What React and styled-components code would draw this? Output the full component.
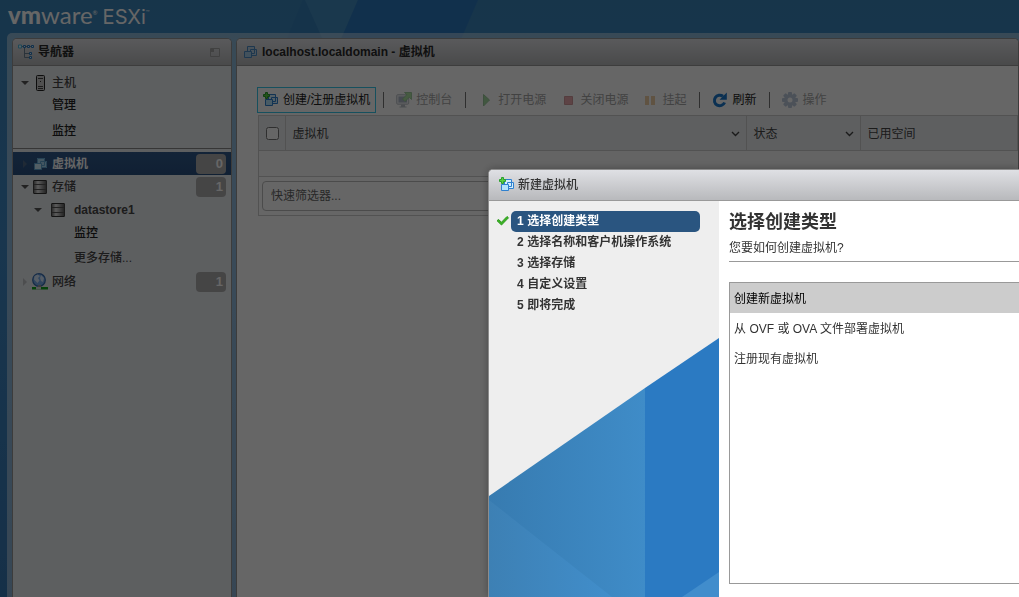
import React from 'react';
import styled, { createGlobalStyle, css } from 'styled-components';

const sans = '"Liberation Sans", "Noto Sans CJK SC", sans-serif';

const GlobalStyle = createGlobalStyle`
  *, *::before, *::after { box-sizing: border-box; }
  html, body, #root { height: 100%; }
  body { margin: 0; overflow: hidden; font: 12px/20px ${sans}; color: #333; }
  button, input { font: inherit; color: inherit; }
  a { color: inherit; text-decoration: none; }
  svg { display: block; flex: none; }
`;

const Page = styled.div`
  position: relative;
  isolation: isolate;
  display: flex;
  flex-direction: column;
  height: 100%;
  padding-left: 7px;
  background: linear-gradient(#3a84ba, #3f88c4 40%, #3678b4);
`;

const HeaderArt = styled.svg`
  position: absolute;
  z-index: -1;
  top: 0;
  left: 0;
`;

const TopBar = styled.header`
  display: flex;
  align-items: baseline;
  height: 33px;
  padding-left: 1px;
  color: #fff;
  font-family: Lato, sans-serif;
  white-space: nowrap;
  sup { font-size: 6px; line-height: 6px; vertical-align: 9px; }
`;

const Brand = styled.span`
  font-size: 24px;
  line-height: 30px;
  b { font-weight: 900; }
`;

const Product = styled.span`
  margin-left: 5px;
  font-family: Inter, sans-serif;
  font-size: 20px;
  line-height: 28px;
`;

const Workspace = styled.div`
  display: flex;
  flex: 1;
  gap: 4px;
  min-height: 0;
  padding: 5px 0 0 5px;
  border-top-left-radius: 5px;
  background: rgba(255, 255, 255, 0.42);
`;

const Panel = styled.section`
  display: flex;
  flex-direction: column;
  flex: ${(p) => (p.$width ? `0 0 ${p.$width}` : '1')};
  min-width: 0;
  overflow: hidden;
  border: 1px solid #969696;
  border-bottom: 0;
  border-radius: 5px 5px 0 0;
  background: ${(p) => p.$bg};
`;

const PanelHeader = styled.header`
  display: flex;
  align-items: center;
  gap: 4px;
  height: 27px;
  flex: none;
  padding: 0 10px 0 5px;
  border-bottom: 1px solid #999;
  background: linear-gradient(#e0e1e5, #b8b9bb);
  font-weight: 700;
`;

const PanelTitle = styled.h2`
  flex: 1;
  margin: 0;
  font-size: 12px;
  line-height: 20px;
  color: #2a2a2a;
`;

const TreeGroup = styled.div`
  padding: ${(p) => (p.$top ? '5px 0 2px' : '3px 0 0')};
  border-bottom: ${(p) => (p.$top ? '1px solid #888' : '0')};
`;

const TreeLink = styled.a`
  display: flex;
  align-items: center;
  height: ${(p) => p.$height || 23}px;
  padding: 0 5px 0 ${(p) => p.$indent}px;
  font-weight: ${(p) => (p.$weight || 500)};
  color: ${(p) => p.$color || '#484848'};
  ${(p) => p.$active && css`
    background: linear-gradient(#305a8c, #2a5080);
    color: #fff;
    font-weight: 700;
  `}
`;

const IconSlot = styled.span`
  display: flex;
  justify-content: center;
  width: ${(p) => p.$width}px;
`;

const TreeIcon = styled(IconSlot)`
  margin-right: 1px;
`;

const TreeLabel = styled.span`
  flex: 1;
`;

const Badge = styled.span`
  width: 30px;
  padding-right: 3px;
  border-radius: 4px;
  background: #adadad;
  color: #fff;
  font-size: 13px;
  font-weight: 700;
  text-align: right;
`;

const MainBody = styled.div`
  padding: 21px 0 0 20px;
`;

const Toolbar = styled.div`
  display: flex;
  align-items: center;
  gap: 2px;
  white-space: nowrap;
`;

const ToolButton = styled.button`
  display: flex;
  align-items: center;
  gap: 4px;
  height: 26px;
  padding: 0 5px;
  border: 1px solid ${(p) => (p.$focused ? '#38c8ea' : 'transparent')};
  background: none;
  color: #222;
  &:disabled { color: #a6a6a6; }
  &:disabled svg { opacity: 0.5; }
`;

const Separator = styled.span`
  width: 1px;
  height: 16px;
  margin: 0 4px 0 5px;
  background: #777;
`;

const Grid = styled.div`
  margin: 2px 0 0 1px;
  border: 1px solid #ccc;
  border-right: 0;
`;

const Table = styled.table`
  width: 100%;
  border-collapse: collapse;
  table-layout: fixed;
`;

const HeadCell = styled.th`
  width: ${(p) => p.$width || 'auto'};
  height: 34px;
  padding: 2px 6px 0 7px;
  border-bottom: 1px solid #ccc;
  border-right: 1px solid #ccc;
  background: #ebeef1;
  color: #444;
  font-weight: 400;
  text-align: left;
`;

const HeadContent = styled.div`
  display: flex;
  align-items: center;
  justify-content: space-between;
`;

const EmptyCell = styled.td`
  height: 26px;
  padding: 0;
  background: #f9f9f9;
`;

const SelectAll = styled.input`
  display: block;
  width: 13px;
  height: 13px;
  margin: 0;
`;

const FilterBar = styled.div`
  padding: 4px 0 4px 3px;
  border-top: 1px solid #ccc;
`;

const FilterInput = styled.input`
  display: block;
  width: 100%;
  height: 30px;
  padding: 0 8px;
  border: 1px solid #bbb;
  border-radius: 4px;
  background: #fff;
  &::placeholder { color: #666; opacity: 1; }
`;

const Backdrop = styled.div`
  position: fixed;
  inset: 0;
  background: rgba(0, 0, 0, 0.6);
`;

const Dialog = styled.section`
  position: fixed;
  top: 169px;
  left: 48%;
  right: 0;
  bottom: 0;
  display: flex;
  flex-direction: column;
  margin-left: -1px;
  border: 1px solid #8c8c8c;
  border-width: 1px 0 0 1px;
  border-top-left-radius: 5px;
  overflow: hidden;
  background: #fff;
  box-shadow: 0 0 8px rgba(0, 0, 0, 0.3);
`;

const DialogHeader = styled.header`
  display: flex;
  align-items: center;
  gap: 3px;
  flex: none;
  height: 31px;
  padding: 0 10px;
  border-bottom: 1px solid #999;
  background: linear-gradient(#dfe0e4, #b8b9bc);
`;

const DialogTitle = styled.h2`
  margin: 0;
  font-size: 12px;
  line-height: 20px;
  font-weight: 500;
`;

const DialogBody = styled.div`
  display: flex;
  flex: 1;
  min-height: 0;
`;

const StepRail = styled.nav`
  display: flex;
  flex-direction: column;
  flex: 0 0 230px;
  background: #eee;
  svg:last-child { margin-top: auto; }
`;

const Steps = styled.ol`
  margin: 0;
  padding: 10px 19px 0 6px;
  list-style: none;
`;

const Step = styled.li`
  display: flex;
  align-items: center;
`;

const StepButton = styled.button`
  flex: 1;
  height: 21px;
  padding: 0 6px 1px;
  border: 0;
  border-radius: 5px;
  background: ${(p) => (p.$current ? '#2a5580' : 'none')};
  color: ${(p) => (p.$current ? '#fff' : '#333')};
  font-weight: 700;
  line-height: 20px;
  text-align: left;
`;

const StepContent = styled.div`
  display: flex;
  flex: 1;
  flex-direction: column;
  padding: 9px 0 13px 10px;
`;

const StepTitle = styled.h1`
  margin: 0;
  font-size: 18px;
  line-height: 24px;
`;

const StepText = styled.p`
  margin: 0 0 20px;
  padding: 4px 0 3px;
  border-bottom: 1px solid #999;
`;

const Options = styled.div`
  flex: 1;
  border: 1px solid #999;
  border-right: 0;
`;

const Option = styled.button`
  display: block;
  width: 100%;
  height: 30px;
  padding: 2px 4px 0;
  border: 0;
  background: ${(p) => (p.$selected ? '#ccc' : 'none')};
  color: ${(p) => (p.$selected ? '#000' : '#333')};
  text-align: left;
`;

const Arrow = ({ open }) => (
  <svg width="8" height="8" viewBox="0 0 8 8">
    {open ? <path d="M0 2h8L4 6z" fill="#555" /> : <path d="M2 0v8l4-4z" fill="#888" opacity=".4" />}
  </svg>
);

const NavigatorIcon = () => (
  <svg width="16" height="16" viewBox="0 0 16 16" fill="none">
    <path d="M4 2.500h11M6.500 3v10.500H11M6.500 9.500H11" stroke="#6b7f92" />
    <path d="M.5 1h3v3h-3z" stroke="#4fb3dc" fill="#dff4fb" />
    <path d="M5.500 1.500h2v2h-2zM9.500 1.500h2v2h-2zM13.500 1.500h2v2h-2zM11.500 8.500h2v2h-2zM11.500 12.500h2v2h-2z" stroke="#2878bd" fill="#dceeff" />
  </svg>
);

const PinIcon = () => (
  <svg width="11" height="9" viewBox="0 0 11 9" fill="none">
    <path d="M.5.500h9v8h-9z" stroke="#a2a2a2" />
    <path d="M1 1h3v3H1z" fill="#a2a2a2" />
  </svg>
);

const VmIcon = ({ add, solid, soft }) => {
  const line = solid ? '#5fa6d3' : soft ? '#4c8ac4' : '#2f80cf';
  return (
    <svg width="16" height="16" viewBox="0 0 16 16">
      <g fill={solid ? '#a9d6f2' : soft ? '#b9cfe0' : '#d3eefd'}>
        <path d="M5 2h8v8H5z" />
        <path d="M8 5h7v7H8z" />
      </g>
      <path d="M5.500 2.500h7v7h-7z" fill="none" stroke={line} />
      <path d="M8.500 5.500h6v6h-6z" fill="none" stroke={line} />
      <path d="M2.500 7.500h7v6h-7z" fill={solid ? '#cdeafb' : soft ? '#a6cbe6' : '#b4e4fc'} stroke={line} />
      {add && <path d="M2.500.500h2v2h2v2h-2v2h-2v-2h-2v-2h2z" fill="#5bd13f" stroke="#2aa02c" />}
    </svg>
  );
};

const HostIcon = () => (
  <svg width="9" height="16" viewBox="0 0 9 16">
    <rect x=".5" y=".5" width="8" height="15" rx="1" fill="#c9c9c9" stroke="#222" />
    <path d="M2 3.500h5M2 11.500h5M2 13.500h5" stroke="#444" />
    <path d="M4 6h1v1H4z" fill="#333" />
  </svg>
);

const StoreIcon = () => (
  <svg width="14" height="14" viewBox="0 0 14 14">
    <defs>
      <linearGradient id="disk">
        <stop stopColor="#555" />
        <stop offset=".35" stopColor="#e4e4e4" />
        <stop offset="1" stopColor="#4c4c4c" />
      </linearGradient>
    </defs>
    <path d="M0 1q0-1 1-1h12q1 0 1 1v12q0 1-1 1H1q-1 0-1-1z" fill="url(#disk)" />
    <path d="M1 .5h12M1 13.500h12" stroke="#333" />
    <path d="M0 4.500h14M0 9.500h14" stroke="#555" />
    <path d="M.5 1v12M13.500 1v12" stroke="#444" />
  </svg>
);

const NetworkIcon = () => (
  <svg width="16" height="17" viewBox="0 0 16 17">
    <circle cx="7" cy="7" r="6.300" fill="#78acec" stroke="#376db0" strokeWidth="1.200" />
    <path d="M2.500 3l3-1.500L8 3 6 5l1.500 2.500L5.500 10 2 6.500zM9 2l3 3-1 4-2-1-1-3z" fill="#d8e9fd" />
    <path d="M6 12h3v2H6z" fill="#999" />
    <path d="M0 14h16v2.500H0z" fill="#12a51f" />
    <path d="M4 14h5v2.500H4z" fill="#ddd" />
  </svg>
);

const ConsoleIcon = () => (
  <svg width="16" height="16" viewBox="0 0 16 16">
    <rect x=".7" y="2.700" width="12" height="9.500" rx="1" fill="#dce1e8" stroke="#7c8591" />
    <path d="M2.500 4.500h8.500v6H2.500z" fill="#5c6f91" />
    <path d="M5 12.500h4v2H5zM3.500 14.500h7v1h-7z" fill="#7c8591" />
    <path d="M8.500.500h7v7l-2.200-2.200L9 9.500 6.500 7l4.300-4.300z" fill="#60c94c" stroke="#2a8d2a" strokeWidth=".8" />
  </svg>
);

const PlayIcon = () => (
  <svg width="16" height="16" viewBox="0 0 16 16"><path d="M5.500 2.500 11.500 8l-6 6z" fill="#4bb544" stroke="#368f35" /></svg>
);
const StopIcon = () => (
  <svg width="16" height="16" viewBox="0 0 16 16"><path d="M4.500 4.500h8v8h-8z" fill="#d5555c" stroke="#a8333b" /></svg>
);
const PauseIcon = () => (
  <svg width="16" height="16" viewBox="0 0 16 16"><path d="M3 4h4v9H3zM9 4h4v9H9z" fill="#e5a14f" /></svg>
);
const RefreshIcon = () => (
  <svg width="16" height="16" viewBox="0 0 16 16">
    <path d="M11 4.300A5.300 5.300 0 1 0 12.600 10.500" fill="none" stroke="#1a78cc" strokeWidth="3" />
    <path d="M14.800.500v7.300H7.500z" fill="#1a78cc" />
  </svg>
);
const GearIcon = () => (
  <svg width="16" height="16" viewBox="0 0 16 16">
    <g fill="#7d98bd">
      {[0, 45, 90, 135].map((a) => (
        <rect key={a} x="6" y="0" width="4" height="16" rx="1" transform={`rotate(${a} 8 8)`} />
      ))}
      <circle cx="8" cy="8" r="6" />
    </g>
    <circle cx="8" cy="8" r="2.500" fill="#fff" />
  </svg>
);
const Chevron = () => (
  <svg width="9" height="6" viewBox="0 0 9 6"><path d="M1 1l3.500 3.500L8 1" fill="none" stroke="#444" strokeWidth="1.400" /></svg>
);
const CheckIcon = () => (
  <svg width="16" height="14" viewBox="0 0 16 14">
    <path d="M3.500 4.500l3 2.700 5.500-5.700 1.500 1.300-7 7.200L2 5.700z" fill="#3bb324" stroke="#2c9a1c" />
  </svg>
);

const RailArt = () => (
  <svg viewBox="0 0 230 260" width="100%">
    <defs>
      <linearGradient id="upper"><stop stopColor="#377bb0" /><stop offset="1" stopColor="#3f8cc8" /></linearGradient>
      <linearGradient id="lower"><stop stopColor="#3d80b4" /><stop offset="1" stopColor="#418ecb" /></linearGradient>
    </defs>
    <path d="M0 159 156 51v209H0z" fill="url(#upper)" />
    <path d="M0 163 123 260H0z" fill="url(#lower)" />
    <path d="M156 51 230 1v259h-74z" fill="#2b7ac2" />
    <path d="M193 260 230 235v25z" fill="#418dcc" />
  </svg>
);

const tree = [
  { label: '虚拟机', icon: <VmIcon solid />, indent: 8, badge: 0, active: true },
  { label: '存储', icon: <StoreIcon />, indent: 8, open: true, badge: 1 },
  { label: 'datastore1', icon: <StoreIcon />, indent: 21, open: true, weight: 700, wide: true },
  { label: '监控', indent: 61, color: '#222', leaf: true, height: 24 },
  { label: '更多存储...', indent: 61, leaf: true, height: 25 },
  { label: '网络', icon: <NetworkIcon />, indent: 8, badge: 1 },
];

const steps = ['选择创建类型', '选择名称和客户机操作系统', '选择存储', '自定义设置', '即将完成'];
const options = ['创建新虚拟机', '从 OVF 或 OVA 文件部署虚拟机', '注册现有虚拟机'];

export default function App() {
  return (
    <>
      <GlobalStyle />
      <Page>
        <HeaderArt width="480" height="60" viewBox="0 0 480 60">
          <path d="M303 0h55l-26 60h-54z" fill="#3680b8" />
          <path d="M305 0h53l-26 60z" fill="#438cc1" />
          <path d="M358 0h120l-26 60H332z" fill="#2c79be" />
        </HeaderArt>
        <TopBar>
          <Brand><b>vm</b>ware<sup>®</sup></Brand>
          <Product>ESXi<sup>™</sup></Product>
        </TopBar>
        <Workspace>
          <Panel $width="220px" $bg="#e8edf0">
            <PanelHeader>
              <NavigatorIcon />
              <PanelTitle>导航器</PanelTitle>
              <PinIcon />
            </PanelHeader>
            <TreeGroup $top>
              <TreeLink href="#host" $indent={8}>
                <Arrow open />
                <TreeIcon $width={22}><HostIcon /></TreeIcon>
                <TreeLabel>主机</TreeLabel>
              </TreeLink>
              <TreeLink href="#manage" $indent={39} $height={22} $color="#222">管理</TreeLink>
              <TreeLink href="#monitor" $indent={39} $height={30} $color="#222">监控</TreeLink>
            </TreeGroup>
            <TreeGroup>
              {tree.map((n) => (
                <TreeLink key={n.label} href={`#${n.label}`} $indent={n.indent} $height={n.height}
                  $weight={n.weight} $color={n.color} $active={n.active}>
                  {!n.leaf && <Arrow open={n.open} />}
                  {n.icon && <TreeIcon $width={n.wide ? 31 : 22}>{n.icon}</TreeIcon>}
                  <TreeLabel>{n.label}</TreeLabel>
                  {n.badge !== undefined && <Badge>{n.badge}</Badge>}
                </TreeLink>
              ))}
            </TreeGroup>
          </Panel>
          <Panel $bg="#fff">
            <PanelHeader>
              <VmIcon soft />
              <PanelTitle>localhost.localdomain - 虚拟机</PanelTitle>
            </PanelHeader>
            <MainBody>
              <Toolbar>
                <ToolButton $focused><VmIcon add />创建/注册虚拟机</ToolButton>
                <Separator />
                <ToolButton disabled><ConsoleIcon />控制台</ToolButton>
                <Separator />
                <ToolButton disabled><PlayIcon />打开电源</ToolButton>
                <ToolButton disabled><StopIcon />关闭电源</ToolButton>
                <ToolButton disabled><PauseIcon />挂起</ToolButton>
                <Separator />
                <ToolButton><RefreshIcon />刷新</ToolButton>
                <Separator />
                <ToolButton disabled><GearIcon />操作</ToolButton>
              </Toolbar>
              <Grid>
                <Table>
                  <thead>
                    <tr>
                      <HeadCell $width="26px"><SelectAll type="checkbox" aria-label="全选" /></HeadCell>
                      <HeadCell $width="461px"><HeadContent>虚拟机<Chevron /></HeadContent></HeadCell>
                      <HeadCell $width="114px"><HeadContent>状态<Chevron /></HeadContent></HeadCell>
                      <HeadCell>已用空间</HeadCell>
                    </tr>
                  </thead>
                  <tbody><tr><EmptyCell colSpan={4} /></tr></tbody>
                </Table>
                <FilterBar><FilterInput aria-label="快速筛选器" placeholder="快速筛选器..." /></FilterBar>
              </Grid>
            </MainBody>
          </Panel>
        </Workspace>
      </Page>
      <Backdrop />
      <Dialog role="dialog" aria-labelledby="dialog-title">
        <DialogHeader>
          <VmIcon add />
          <DialogTitle id="dialog-title">新建虚拟机</DialogTitle>
        </DialogHeader>
        <DialogBody>
          <StepRail>
            <Steps>
              {steps.map((s, i) => (
                <Step key={s}>
                  <IconSlot $width={16}>{i === 0 && <CheckIcon />}</IconSlot>
                  <StepButton $current={i === 0}>{i + 1} {s}</StepButton>
                </Step>
              ))}
            </Steps>
            <RailArt />
          </StepRail>
          <StepContent>
            <StepTitle>{steps[0]}</StepTitle>
            <StepText>您要如何创建虚拟机?</StepText>
            <Options>
              {options.map((o, i) => <Option key={o} $selected={i === 0}>{o}</Option>)}
            </Options>
          </StepContent>
        </DialogBody>
      </Dialog>
    </>
  );
}
